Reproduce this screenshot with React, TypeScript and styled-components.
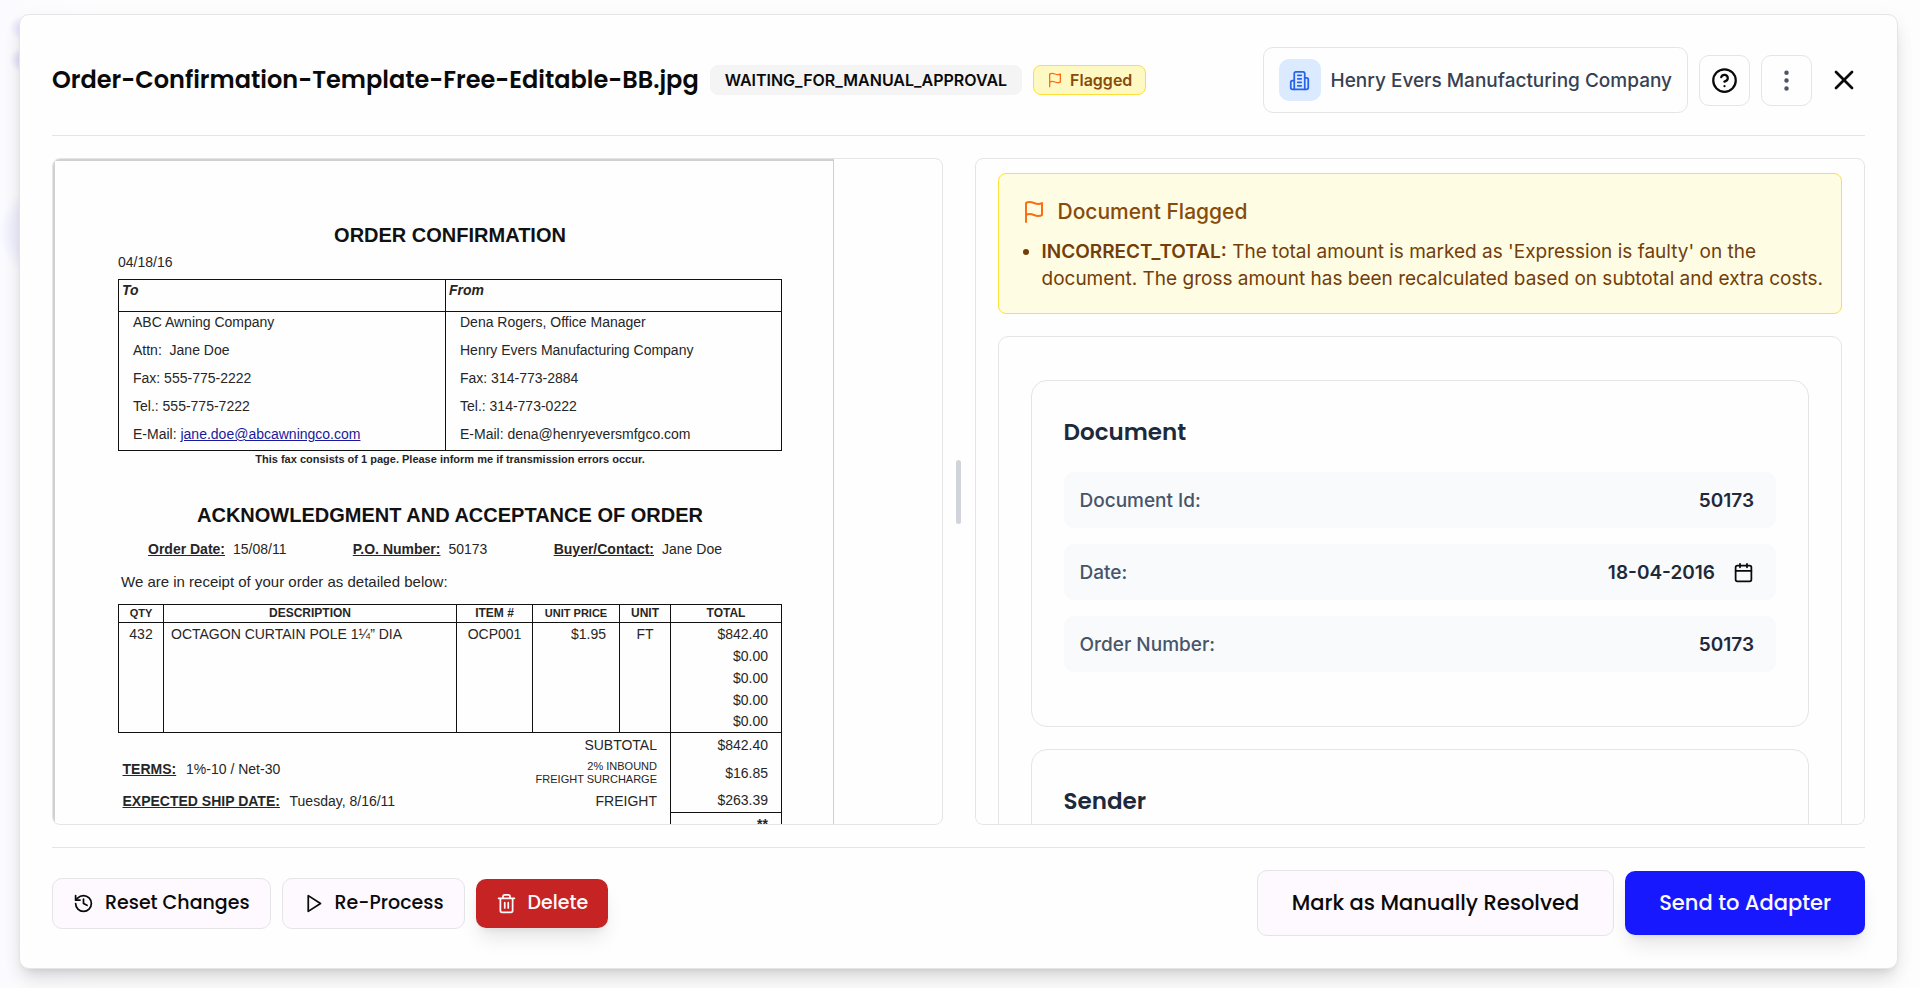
import React from "react";
import styled, { createGlobalStyle, css } from "styled-components";
import { CircleHelp, EllipsisVertical, History, X } from "lucide-react";

const ui = `"Inter", "Liberation Sans", sans-serif`;
const display = `"Poppins", "Inter", "Liberation Sans", sans-serif`;
const line = "#e5e5e7";
const ink = "#262626";
const rule = "#111";

const GlobalStyle = createGlobalStyle`
  *, *::before, *::after { box-sizing: border-box; }
  body {
    margin: 0;
    font-family: ${ui};
    color: #0a0a0a;
    background:
      radial-gradient(circle at 22px 28px, rgba(70, 60, 220, 0.16), transparent 13px),
      radial-gradient(circle at 22px 60px, rgba(70, 60, 220, 0.18), transparent 13px),
      radial-gradient(ellipse 26px 40px at 24px 232px, rgba(90, 80, 230, 0.07) 50%, transparent),
      linear-gradient(90deg, #fbfbff, #fdfdfe 90px, #fdfdfd);
  }
  button, input { font: inherit; color: inherit; }
  h1, h2, h3, p, ul, dl, dd { margin: 0; }
`;

const Screen = styled.div`
  display: flex;
  height: 100vh;
  min-height: 640px;
  padding: 14px 22px 19px 19px;
`;

const Modal = styled.main`
  display: flex;
  flex-direction: column;
  flex: 1;
  min-width: 0;
  padding: 32px;
  background: #fefefe;
  border: 1px solid ${line};
  border-radius: 10px;
  box-shadow: 0 13px 20px -4px rgba(0, 0, 0, 0.12), 0 5px 8px -5px rgba(0, 0, 0, 0.12),
    0 4px 20px rgba(0, 0, 0, 0.04);
`;

const Header = styled.header`
  display: flex;
  align-items: center;
  justify-content: space-between;
  gap: 24px;
  padding-bottom: 22px;
  border-bottom: 1px solid ${line};
`;

const Cluster = styled.div`
  display: flex;
  align-items: center;
  gap: 11px;
`;

const Title = styled.h1`
  font: 600 24px/32px ${display};
  white-space: nowrap;
`;

const Badge = styled.span<{ $flagged?: boolean }>`
  display: inline-flex;
  align-items: center;
  gap: 7px;
  height: 30px;
  padding: 0 14px;
  border: 1px solid #f4f4f5;
  border-radius: 8px;
  background: #f4f4f5;
  font-size: 16px;
  font-weight: 600;
  ${(p) =>
    p.$flagged &&
    css`
      padding: 0 13px;
      color: #874b0c;
      background: #fef9c2;
      border-color: #fddf3a;
    `}
`;

const Company = styled.div`
  display: flex;
  align-items: center;
  gap: 10px;
  height: 66px;
  padding: 0 15px;
  border: 1px solid ${line};
  border-radius: 10px;
  color: #374151;
  font-size: 19px;
  font-weight: 500;
  white-space: nowrap;
`;

const CompanyIcon = styled.span`
  display: grid;
  place-items: center;
  width: 42px;
  height: 42px;
  border-radius: 10px;
  background: #dbeafe;
  color: #2563eb;
`;

const IconButton = styled.button<{ $plain?: boolean }>`
  display: grid;
  place-items: center;
  width: ${(p) => (p.$plain ? 42 : 51)}px;
  height: 51px;
  padding: 0;
  border: ${(p) => (p.$plain ? "0" : `1px solid ${line}`)};
  border-radius: 10px;
  background: transparent;
  cursor: pointer;
`;

const Body = styled.div`
  display: grid;
  grid-template-columns: minmax(0, 1fr) 32px minmax(0, 1fr);
  grid-template-rows: minmax(0, 1fr);
  flex: 1;
  min-height: 0;
  padding: 22px 0;
`;

const Panel = styled.section<{ $padded?: boolean }>`
  overflow: auto;
  scrollbar-width: none;
  padding: ${(p) => (p.$padded ? "14px 22px" : "0")};
  border: 1px solid ${line};
  border-radius: 8px;
`;

const Divider = styled.div`
  display: grid;
  place-items: center;
`;

const Grip = styled.span`
  width: 5px;
  height: 64px;
  border-radius: 3px;
  background: #d1d5db;
`;

/* Scanned order */

const Paper = styled.article`
  width: 781px;
  padding: 62px 51px 40px 63px;
  border: 1px solid #d0d0d2;
  border-left-width: 2px;
  border-top-width: 2px;
  color: ${ink};
  font: 14px/20px "Liberation Sans", Arial, sans-serif;
`;

const PaperHeading = styled.h2`
  font-size: 20px;
  line-height: 24px;
  text-align: center;
  color: #111;
`;

const PaperDate = styled.p`
  padding: 5px 0 7px;
`;

const Grid = styled.table`
  width: 100%;
  border-collapse: collapse;
  table-layout: fixed;
  color: ${ink};
`;

const PartyHead = styled.th`
  height: 32px;
  padding: 0 3px;
  border: 1px solid ${rule};
  text-align: left;
  vertical-align: top;
  font-style: italic;
`;

const PartyCell = styled.td`
  padding: 0 14px 6px;
  border: 1px solid ${rule};
  vertical-align: top;

  a { color: #1a1a9c; }
`;

const PartyLines = styled.div`
  display: grid;
  gap: 8px;
`;

const FaxNote = styled.p`
  padding-bottom: 36px;
  font-size: 11px;
  line-height: 16px;
  font-weight: 700;
  text-align: center;
`;

const OrderFacts = styled.dl`
  display: flex;
  justify-content: space-between;
  padding: 12px 60px 0 30px;

  div { display: flex; gap: 8px; }
  dt { font-weight: 700; text-decoration: underline; }
`;

const Receipt = styled.p`
  padding: 13px 3px 12px;
  font-size: 15px;
`;

const ColHead = styled.th<{ $small?: boolean }>`
  height: 18px;
  padding: 0;
  border: 1px solid ${rule};
  font-size: ${(p) => (p.$small ? 11 : 12)}px;
  line-height: 15px;
`;

const Cell = styled.td<{ $align?: string; $last?: boolean; $boxed?: boolean }>`
  height: 22px;
  padding: 0 13px 0 7px;
  line-height: 20px;
  text-align: ${(p) => p.$align ?? "left"};
  ${(p) => p.$align === "center" && "padding: 0;"}
  ${(p) => p.$boxed !== false && `border-left: 1px solid ${rule}; border-right: 1px solid ${rule};`}
  ${(p) => p.$last && `border-bottom: 1px solid ${rule};`}
`;

const Term = styled.td`
  padding: 2px 4px 0;
  vertical-align: top;

  b { margin-right: 6px; text-decoration: underline; }
`;

const SumRow = styled.tr<{ $height: number }>`
  height: ${(p) => p.$height}px;
`;

const Fine = styled.span`
  display: block;
  font-size: 11px;
  line-height: 13px;
`;

/* Extracted data */

const Alert = styled.div`
  padding: 22px 16px 21px 23px;
  border: 1px solid #fddf3a;
  border-radius: 8px;
  background: #fefce2;
  color: #733e0a;
`;

const AlertTitle = styled.h2`
  display: flex;
  align-items: center;
  gap: 12px;
  color: #874b0c;
  font-size: 21px;
  line-height: 32px;
  font-weight: 500;
`;

const Reasons = styled.ul`
  padding: 10px 0 0 20px;
  font-size: 19px;
  line-height: 27px;

  b { font-weight: 600; }
`;

const FormBox = styled.div`
  display: flex;
  flex-direction: column;
  gap: 22px;
  margin-top: 22px;
  padding: 43px 32px;
  border: 1px solid ${line};
  border-radius: 10px;
`;

const Card = styled.section`
  padding: 32px 32px 54px;
  border: 1px solid ${line};
  border-radius: 16px;
`;

const CardTitle = styled.h3`
  padding-bottom: 21px;
  color: #1e293b;
  font: 600 23px/38px ${display};
`;

const Fields = styled.div`
  display: grid;
  gap: 16px;
`;

const Field = styled.div`
  display: flex;
  align-items: center;
  gap: 18px;
  height: 56px;
  padding: 0 22px 0 16px;
  border-radius: 10px;
  background: #f8fafc;
  color: #1e293b;
  font-size: 19px;
  font-weight: 600;

  label { color: #475569; font-weight: 500; }
`;

const Value = styled.input`
  flex: 1;
  min-width: 0;
  padding: 0;
  border: 0;
  outline: 0;
  background: transparent;
  text-align: right;
`;

const PickDate = styled.button`
  display: grid;
  padding: 0;
  border: 0;
  background: transparent;
  color: #0a0a0a;
`;

/* Footer */

const Footer = styled.footer`
  display: flex;
  align-items: center;
  justify-content: space-between;
  padding-top: 22px;
  border-top: 1px solid ${line};
`;

const Button = styled.button<{ $tone?: "danger" | "primary"; $large?: boolean }>`
  display: inline-flex;
  align-items: center;
  gap: 11px;
  height: ${(p) => (p.$large ? 66 : 51)}px;
  padding: 0 ${(p) => (p.$large ? 34 : 20)}px;
  border: 1px solid ${line};
  border-radius: 10px;
  background: #fdf9ff;
  color: #0a0a0a;
  font: 500 ${(p) => (p.$large ? 21 : 19)}px/28px ${display};
  white-space: nowrap;
  cursor: pointer;
  ${(p) =>
    p.$tone &&
    css`
      height: ${p.$large ? 64 : 49}px;
      border: 0;
      color: #fafafa;
      background: ${p.$tone === "danger" ? "#c62424" : "#1818ff"};
      box-shadow: 0 13px 20px -4px rgba(0, 0, 0, 0.1), 0 5px 8px -5px rgba(0, 0, 0, 0.1);
    `}
`;

const Stroke = ({ size, width = 2, color = "currentColor", children }: {
  size: number; width?: number; color?: string; children: React.ReactNode;
}) => (
  <svg width={size} height={size} viewBox="0 0 24 24" fill="none" stroke={color}
    strokeWidth={width} strokeLinecap="round" strokeLinejoin="round" aria-hidden="true">
    {children}
  </svg>
);

const FlagIcon = ({ size }: { size: number }) => (
  <Stroke size={size} color="#fb6f12">
    <path d="M4 15s1-1 4-1 5 2 8 2 4-1 4-1V3s-1 1-4 1-5-2-8-2-4 1-4 1z" />
    <path d="M4 22v-7" />
  </Stroke>
);

const BuildingIcon = () => (
  <Stroke size={21}>
    <path d="M6 22V4a2 2 0 0 1 2-2h8a2 2 0 0 1 2 2v18Z" />
    <path d="M6 12H4a2 2 0 0 0-2 2v6a2 2 0 0 0 2 2h2" />
    <path d="M18 9h2a2 2 0 0 1 2 2v9a2 2 0 0 1-2 2h-2" />
    <path d="M10 6h4M10 10h4M10 14h4M10 18h4" />
  </Stroke>
);

const CalendarIcon = () => (
  <Stroke size={21}>
    <path d="M8 2v4M16 2v4M3 10h18" />
    <rect x="3" y="4" width="18" height="18" rx="2" />
  </Stroke>
);

const PlayIcon = () => (
  <Stroke size={21}>
    <path d="M6 3l14 9-14 9z" />
  </Stroke>
);

const TrashIcon = () => (
  <Stroke size={21}>
    <path d="M3 6h18M19 6v14a2 2 0 0 1-2 2H7a2 2 0 0 1-2-2V6M8 6V4a2 2 0 0 1 2-2h4a2 2 0 0 1 2 2v2M10 11v6M14 11v6" />
  </Stroke>
);

const zeroRows = [0, 1, 2, 3];
const smallHeads = ["QTY", "UNIT PRICE"];

const ScannedOrder = () => (
  <Paper>
    <PaperHeading>ORDER CONFIRMATION</PaperHeading>
    <PaperDate>04/18/16</PaperDate>
    <Grid>
      <colgroup><col width="327" /><col /></colgroup>
      <thead>
        <tr><PartyHead>To</PartyHead><PartyHead>From</PartyHead></tr>
      </thead>
      <tbody>
        <tr>
          <PartyCell>
            <PartyLines>
              <span>ABC Awning Company</span>
              <span>Attn:&nbsp; Jane Doe</span>
              <span>Fax: 555-775-2222</span>
              <span>Tel.: 555-775-7222</span>
              <span>E-Mail: <a href="mailto:jane.doe@abcawningco.com">jane.doe@abcawningco.com</a></span>
            </PartyLines>
          </PartyCell>
          <PartyCell>
            <PartyLines>
              <span>Dena Rogers, Office Manager</span>
              <span>Henry Evers Manufacturing Company</span>
              <span>Fax: 314-773-2884</span>
              <span>Tel.: 314-773-0222</span>
              <span>E-Mail: dena@henryeversmfgco.com</span>
            </PartyLines>
          </PartyCell>
        </tr>
      </tbody>
    </Grid>
    <FaxNote>This fax consists of 1 page. Please inform me if transmission errors occur.</FaxNote>
    <PaperHeading>ACKNOWLEDGMENT AND ACCEPTANCE OF ORDER</PaperHeading>
    <OrderFacts>
      <div><dt>Order Date:</dt><dd>15/08/11</dd></div>
      <div><dt>P.O. Number:</dt><dd>50173</dd></div>
      <div><dt>Buyer/Contact:</dt><dd>Jane Doe</dd></div>
    </OrderFacts>
    <Receipt>We are in receipt of your order as detailed below:</Receipt>
    <Grid>
      <colgroup>
        <col width="45" /><col width="293" /><col width="76" /><col width="87" /><col width="51" /><col />
      </colgroup>
      <thead>
        <tr>
          {["QTY", "DESCRIPTION", "ITEM #", "UNIT PRICE", "UNIT", "TOTAL"].map((h) => (
            <ColHead key={h} $small={smallHeads.includes(h)}>{h}</ColHead>
          ))}
        </tr>
      </thead>
      <tbody>
        <tr>
          <Cell $align="center">432</Cell>
          <Cell>OCTAGON CURTAIN POLE 1¼” DIA</Cell>
          <Cell $align="center">OCP001</Cell>
          <Cell $align="right">$1.95</Cell>
          <Cell $align="center">FT</Cell>
          <Cell $align="right">$842.40</Cell>
        </tr>
        {zeroRows.map((r) => (
          <tr key={r}>
            {[0, 1, 2, 3, 4].map((c) => <Cell key={c} $last={r === 3} />)}
            <Cell $align="right" $last={r === 3}>$0.00</Cell>
          </tr>
        ))}
      </tbody>
      <tfoot>
        <SumRow $height={24}>
          <Cell colSpan={5} $align="right" $boxed={false}>SUBTOTAL</Cell>
          <Cell $align="right">$842.40</Cell>
        </SumRow>
        <SumRow $height={32}>
          <Term colSpan={2}><b>TERMS:</b> 1%-10 / Net-30</Term>
          <Cell colSpan={3} $align="right" $boxed={false}><Fine>2% INBOUND</Fine><Fine>FREIGHT SURCHARGE</Fine></Cell>
          <Cell $align="right">$16.85</Cell>
        </SumRow>
        <SumRow $height={24}>
          <Term colSpan={2}><b>EXPECTED SHIP DATE:</b> Tuesday, 8/16/11</Term>
          <Cell colSpan={3} $align="right" $boxed={false}>FREIGHT</Cell>
          <Cell $align="right" $last>$263.39</Cell>
        </SumRow>
        <SumRow $height={22}>
          <Cell colSpan={5} $boxed={false} />
          <Cell $align="right"><b>**</b></Cell>
        </SumRow>
      </tfoot>
    </Grid>
  </Paper>
);

export default function App() {
  return (
    <>
      <GlobalStyle />
      <Screen>
        <Modal>
          <Header>
            <Cluster>
              <Title>Order-Confirmation-Template-Free-Editable-BB.jpg</Title>
              <Badge>WAITING_FOR_MANUAL_APPROVAL</Badge>
              <Badge $flagged><FlagIcon size={16} />Flagged</Badge>
            </Cluster>
            <Cluster>
              <Company>
                <CompanyIcon><BuildingIcon /></CompanyIcon>
                Henry Evers Manufacturing Company
              </Company>
              <IconButton aria-label="Help"><CircleHelp size={27} /></IconButton>
              <IconButton aria-label="More actions"><EllipsisVertical size={27} color="#4b5563" /></IconButton>
              <IconButton $plain aria-label="Close"><X size={32} /></IconButton>
            </Cluster>
          </Header>

          <Body>
            <Panel><ScannedOrder /></Panel>
            <Divider><Grip /></Divider>
            <Panel $padded>
              <Alert>
                <AlertTitle><FlagIcon size={24} />Document Flagged</AlertTitle>
                <Reasons>
                  <li>
                    <b>INCORRECT_TOTAL:</b> The total amount is marked as 'Expression is faulty' on the
                    document. The gross amount has been recalculated based on subtotal and extra costs.
                  </li>
                </Reasons>
              </Alert>
              <FormBox>
                <Card>
                  <CardTitle>Document</CardTitle>
                  <Fields>
                    <Field>
                      <label htmlFor="doc-id">Document Id:</label>
                      <Value id="doc-id" defaultValue="50173" />
                    </Field>
                    <Field>
                      <label htmlFor="doc-date">Date:</label>
                      <Value id="doc-date" defaultValue="18-04-2016" />
                      <PickDate aria-label="Pick a date"><CalendarIcon /></PickDate>
                    </Field>
                    <Field>
                      <label htmlFor="order-no">Order Number:</label>
                      <Value id="order-no" defaultValue="50173" />
                    </Field>
                  </Fields>
                </Card>
                <Card>
                  <CardTitle>Sender</CardTitle>
                </Card>
              </FormBox>
            </Panel>
          </Body>

          <Footer>
            <Cluster>
              <Button><History size={21} />Reset Changes</Button>
              <Button><PlayIcon />Re-Process</Button>
              <Button $tone="danger"><TrashIcon />Delete</Button>
            </Cluster>
            <Cluster>
              <Button $large>Mark as Manually Resolved</Button>
              <Button $large $tone="primary">Send to Adapter</Button>
            </Cluster>
          </Footer>
        </Modal>
      </Screen>
    </>
  );
}
